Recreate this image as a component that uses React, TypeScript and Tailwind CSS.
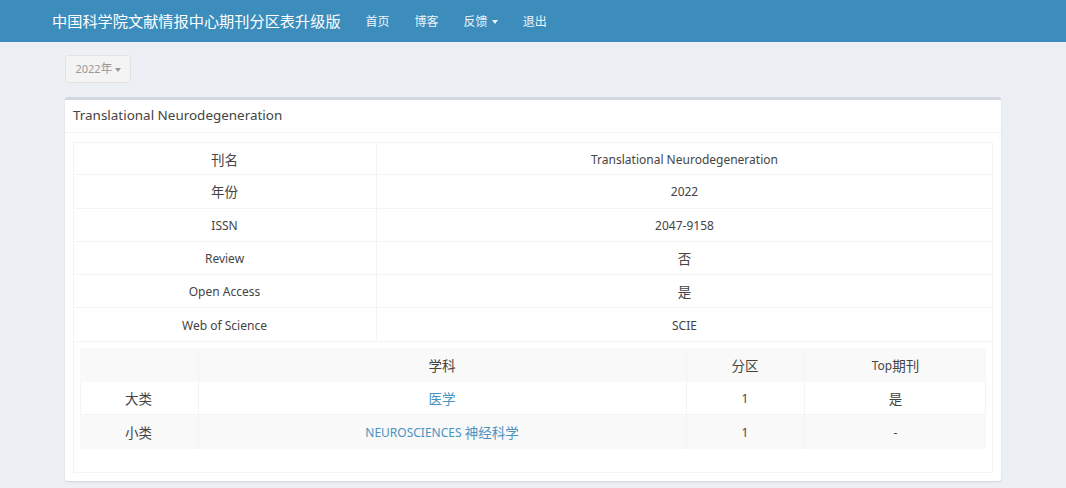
const font = { fontFamily: '"Noto Sans", "Noto Sans CJK SC", sans-serif' };

const infoRows = [
  ["刊名", "Translational Neurodegeneration", true, false],
  ["年份", "2022", true, false],
  ["ISSN", "2047-9158", false, false],
  ["Review", "否", false, true],
  ["Open Access", "是", false, true],
  ["Web of Science", "SCIE", false, false],
] as const;

function Caret({ className }: { className: string }) {
  return <span className={`inline-block w-0 h-0 align-middle border-x-[3.5px] border-x-transparent border-t-[4px] border-t-current ${className}`} />;
}

function Cjk({ children }: { children: React.ReactNode }) {
  return <span className="text-[13.5px]">{children}</span>;
}

const cell = "flex items-center justify-center pt-[2px]";
const cellLine = "flex items-center justify-center pt-[2px] pr-[1px] border-r border-[#f4f4f4]";
const innerCols = "grid grid-cols-[119px_488px_118px_1fr]";

export default function App() {
  return (
    <div className="h-[488px] overflow-hidden bg-[#ecf0f5] text-[#444]" style={font}>
      <nav className="h-[42px] bg-[#3c8dbc] flex items-center pl-[52px] text-white">
        <span className="text-[15.2px] mr-[25px] whitespace-nowrap">中国科学院文献情报中心期刊分区表升级版</span>
        <div className="flex items-center gap-[25px] pt-[1px] text-[12px] text-[#ecf4f9]">
          <a>首页</a>
          <a>博客</a>
          <a>反馈 <Caret className="ml-[1px]" /></a>
          <a>退出</a>
        </div>
      </nav>

      <div className="pl-[65px] w-[1001px]">
        <div className="pt-[13px] pb-[14px]">
          <button className="h-[28px] w-[66px] rounded-[3px] border border-[#e3e3e3] bg-[#f4f4f4] text-[11px] text-[#999]">
            2022<span className="text-[12px]">年</span><Caret className="ml-[2px]" />
          </button>
        </div>

        <div className="h-[384px] rounded-[3px] border-t-[3px] border-t-[#d2d6de] bg-white shadow-[0_1px_2px_rgba(0,0,0,0.12)]">
          <div className="h-[33px] border-b border-[#f4f4f4] px-2 pb-[2px] flex items-center text-[13.45px]">
            Translational Neurodegeneration
          </div>

          <div className="mx-2 mt-[9px] h-[331px] border-x border-b border-[#f4f4f4] text-[12px]">
            {infoRows.map(([name, value, cjkName, cjkValue]) => (
              <div key={name} className="grid grid-cols-[303px_1fr] h-[33.3px] border-b first:border-t border-[#f4f4f4] text-center items-stretch">
                <div className={cellLine}>{cjkName ? <Cjk>{name}</Cjk> : name}</div>
                <div className={cell}>{cjkValue ? <Cjk>{value}</Cjk> : value}</div>
              </div>
            ))}

            <div className="mx-[6px] mt-[6px] text-center">
              <div className={`${innerCols} h-[34px] bg-[#f9f9f9] rounded-t-[2px]`}>
                <div className="border-r border-[#f4f4f4]" />
                <div className={cellLine}><Cjk>学科</Cjk></div>
                <div className={cellLine}><Cjk>分区</Cjk></div>
                <div className={cell}>Top<Cjk>期刊</Cjk></div>
              </div>
              <div className={`${innerCols} h-[33px] border-b border-[#f4f4f4] shadow-[inset_1px_0_0_#f4f4f4,inset_-1px_0_0_#f4f4f4]`}>
                <div className={cellLine}><Cjk>大类</Cjk></div>
                <a className={`${cellLine} text-[#4a93c0]`}><Cjk>医学</Cjk></a>
                <div className={cellLine}>1</div>
                <div className={cell}><Cjk>是</Cjk></div>
              </div>
              <div className={`${innerCols} h-[34px] bg-[#f9f9f9] rounded-b-[2px]`}>
                <div className={cellLine}><Cjk>小类</Cjk></div>
                <a className={`${cellLine} text-[#4a93c0] whitespace-pre`}>NEUROSCIENCES <Cjk>神经科学</Cjk></a>
                <div className={cellLine}>1</div>
                <div className={cell}>-</div>
              </div>
            </div>
          </div>
        </div>
      </div>
    </div>
  );
}
